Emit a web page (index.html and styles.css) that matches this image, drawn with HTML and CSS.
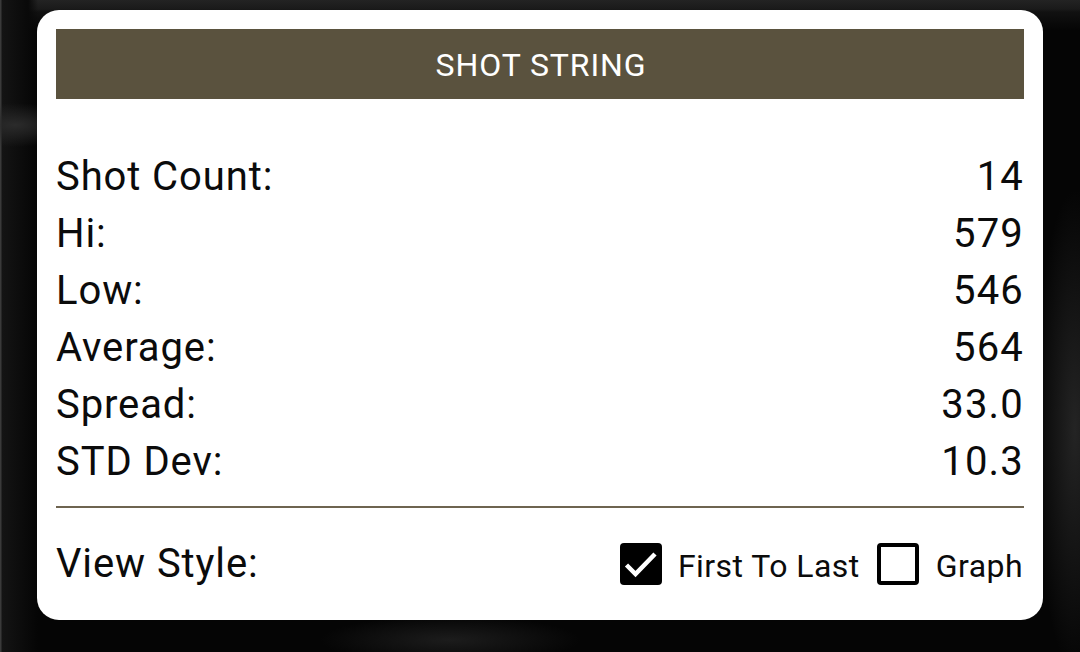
FILE: index.html
```html
<!DOCTYPE html>
<html lang="en">
<head>
<meta charset="utf-8">
<title>Shot String</title>
<link rel="stylesheet" href="styles.css">
</head>
<body>
<main class="card">
  <h1 class="title">SHOT STRING</h1>
  <dl class="stats">
    <div class="row"><dt>Shot Count:</dt><dd>14</dd></div>
    <div class="row"><dt>Hi:</dt><dd>579</dd></div>
    <div class="row"><dt>Low:</dt><dd>546</dd></div>
    <div class="row"><dt>Average:</dt><dd>564</dd></div>
    <div class="row"><dt>Spread:</dt><dd>33.0</dd></div>
    <div class="row"><dt>STD Dev:</dt><dd>10.3</dd></div>
  </dl>
  <div class="view">
    <span class="view-label">View Style:</span>
    <div class="options">
      <span class="box checked"><svg viewBox="0 0 42 42" width="42" height="42"><path d="M6.5 22 L15.5 31 L35 11" fill="none" stroke="#fff" stroke-width="4.5"/></svg></span>
      <span class="opt first">First To Last</span>
      <span class="box"></span>
      <span class="opt">Graph</span>
    </div>
  </div>
</main>
</body>
</html>
```
FILE: styles.css
```css
* { box-sizing: border-box; }
html, body { margin: 0; height: 652px; overflow: hidden; }
body {
  padding: 10px 37px 32px;
  font-family: Roboto, "Liberation Sans", sans-serif;
  color: #0b0b0b;
  background-color: #050505;
  background-image:
    radial-gradient(ellipse 130px 24px at 450px 640px, #1c1c1c, transparent),
    radial-gradient(ellipse 60px 22px at 15px 125px, #2b2b2b, transparent),
    linear-gradient(90deg, #3a3a3a 0, #3a3a3a 1px, #141414 2px, #090909 28px, transparent 38px),
    linear-gradient(180deg, #232323 0, #1a1a1a 9px, #111 12px, transparent 30px),
    radial-gradient(ellipse 40px 240px at 1075px 430px, #242424, transparent);
}
.card {
  width: 1006px;
  height: 610px;
  background: #fff;
  border-radius: 22px;
  padding: 19px 19px 0;
}
.title {
  margin: 0;
  height: 70px;
  padding-left: 2px;
  background: #5a523e;
  color: #fff;
  font-size: 32px;
  font-weight: 400;
  line-height: 72px;
  text-align: center;
  letter-spacing: .9px;
}
.stats { margin: 49px 0 0; }
.row {
  display: flex;
  justify-content: space-between;
  height: 57px;
  line-height: 57px;
  font-size: 40px;
  letter-spacing: .9px;
}
.row dt { margin: 0; }
.row dd { margin: 0; letter-spacing: 1.2px; }
.view {
  margin-top: 16px;
  padding-top: 23px;
  border-top: 2px solid #6e6450;
  display: flex;
  justify-content: space-between;
  align-items: center;
}
.view-label { font-size: 40px; line-height: 66px; letter-spacing: .9px; }
.options { display: flex; align-items: center; margin-right: 1px; }
.box {
  width: 42px;
  height: 42px;
  border: 4px solid #000;
  border-radius: 4px;
  display: block;
  background: #fff;
}
.box.checked { border: 0; background: #000; }
.box svg { display: block; }
.opt { font-size: 32px; margin-left: 17px; position: relative; top: 2px; letter-spacing: .45px; }
.opt.first { margin-left: 16px; margin-right: 17px; }
```
